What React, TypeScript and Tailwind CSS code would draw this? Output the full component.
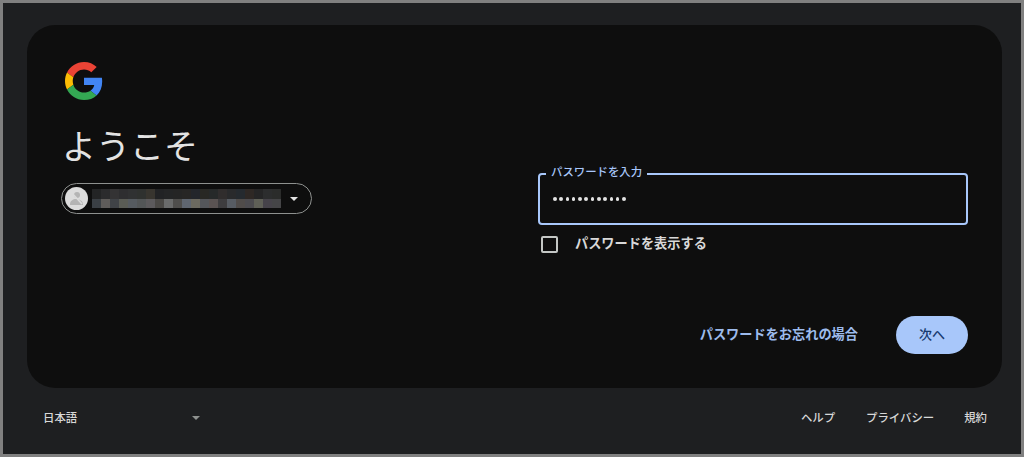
const jp = { fontFamily: '"Roboto", "Noto Sans CJK JP", sans-serif' };

const row1 = ["#232425","#2b2b2d","#343334","#2e2e30","#303132","#2f312f","#38352f","#222325","#242526","#252525","#272625","#23262b","#282824","#262929","#302d2d","#292a2c","#252a2f","#2e2825","#252526","#2c2d2e","#2b2c2b"];
const row2 = ["#3a3f44","#5f5c5a","#404347","#5a5c55","#565b60","#535657","#5c5a5c","#4a4845","#6a6b6b","#4f4e4c","#5f6670","#6c6a60","#54565a","#5a5352","#3e3d3f","#575c63","#504c4a","#4c4b4f","#5f6057","#46434a","#454547"];

function GoogleLogo() {
  return (
    <svg width="38" height="38" viewBox="0 0 48 48" aria-hidden="true">
      <path fill="#EA4335" d="M24 9.5c3.54 0 6.71 1.22 9.21 3.6l6.85-6.85C35.9 2.38 30.47 0 24 0 14.62 0 6.51 5.38 2.56 13.22l7.98 6.19C12.43 13.72 17.74 9.5 24 9.5z" />
      <path fill="#4285F4" d="M46.98 24.55c0-1.57-.15-3.09-.38-4.55H24v9.02h12.94c-.58 2.96-2.26 5.48-4.78 7.18l7.73 6c4.51-4.18 7.09-10.36 7.09-17.65z" />
      <path fill="#FBBC05" d="M10.53 28.59c-.48-1.45-.76-2.99-.76-4.59s.27-3.14.76-4.59l-7.98-6.19C.92 16.46 0 20.12 0 24c0 3.88.92 7.54 2.56 10.78l7.97-6.19z" />
      <path fill="#34A853" d="M24 48c6.48 0 11.93-2.13 15.89-5.81l-7.73-6c-2.15 1.45-4.92 2.3-8.16 2.3-6.26 0-11.57-4.22-13.47-9.91l-7.98 6.19C6.51 42.62 14.62 48 24 48z" />
    </svg>
  );
}

function Avatar() {
  return (
    <div className="w-[23px] h-[23px] rounded-full bg-[#dcdcdc] flex items-center justify-center shrink-0">
      <svg width="17" height="17" viewBox="0 0 17 17" aria-hidden="true">
        <circle cx="9" cy="5" r="3" fill="#b4b4b4" />
        <path d="M2 14c0-3 3-5 6-5s7 2 7 5v1H2z" fill="#b4b4b4" />
        <path d="M3 2l11 12" stroke="#dcdcdc" strokeWidth="1.6" />
      </svg>
    </div>
  );
}

function Caret({ color }: { color: string }) {
  return (
    <svg width="8" height="4" viewBox="0 0 8 4" aria-hidden="true">
      <path d="M0 0h8L4 4z" fill={color} />
    </svg>
  );
}

export default function App() {
  return (
    <div style={jp} className="w-[1024px] h-[457px] border-[3px] border-[#808080] bg-[#1e1f21] flex flex-col overflow-hidden">
      <main className="ml-[24px] mr-[19px] mt-[22px] h-[363px] rounded-[28px] bg-[#0e0e0e] flex justify-between shrink-0">
        <section className="pl-[38px] pt-[37px] flex flex-col items-start">
          <GoogleLogo />
          <h1 className="mt-[25px] ml-[-3px] text-[34px] leading-[44px] font-normal text-[#e3e3e3] whitespace-nowrap">ようこそ</h1>
          <div className="mt-[14px] ml-[-4px] w-[251px] h-[31px] rounded-full border border-[#8e918f] flex items-center pl-[3px]">
            <Avatar />
            <div className="ml-[4px] w-[189px] h-[19px] grid grid-cols-[repeat(21,1fr)] grid-rows-2 blur-[0.4px]">
              {row1.map((c, i) => <div key={`a${i}`} style={{ backgroundColor: c }} />)}
              {row2.map((c, i) => <div key={`b${i}`} style={{ backgroundColor: c }} />)}
            </div>
            <div className="ml-[9px] flex"><Caret color="#e3e3e3" /></div>
          </div>
        </section>
        <section className="w-[430px] mr-[34px] pt-[148px] flex flex-col">
          <div className="relative h-[52px] rounded-[4px] border-2 border-[#a8c7fa] flex items-center pl-[13px]">
            <span className="absolute left-[6px] top-[-11px] px-[5px] bg-[#0e0e0e] text-[11.4px] leading-[16px] font-medium text-[#a8c7fa] whitespace-nowrap">パスワードを入力</span>
            <div className="flex gap-[2.7px]">
              {Array.from({ length: 12 }).map((_, i) => (
                <span key={i} className="w-[3.6px] h-[3.6px] rounded-full bg-[#e3e3e3]" />
              ))}
            </div>
          </div>
          <label className="mt-[10px] flex items-center">
            <span className="ml-[3px] w-[17px] h-[17px] rounded-[2px] border-2 border-[#c4c7c5]" />
            <span className="ml-[17px] text-[13.2px] leading-[18px] font-bold text-[#d8d8d8] whitespace-nowrap">パスワードを表示する</span>
          </label>
          <div className="mt-[63px] flex items-center justify-end">
            <span className="text-[13.2px] leading-[18px] font-bold text-[#9dbbec] whitespace-nowrap">パスワードをお忘れの場合</span>
            <button className="ml-[38px] w-[72px] h-[38px] rounded-full bg-[#a8c7fa] text-[13px] font-medium text-[#183a6e]">次へ</button>
          </div>
        </section>
      </main>
      <footer className="flex-1 flex items-center justify-between pl-[40px] pr-[34px] pb-[6px] text-[11.4px] leading-[16px] font-medium text-[#d8d8d8]">
        <div className="flex items-center w-[157px] justify-between">
          <span>日本語</span>
          <Caret color="#8e918f" />
        </div>
        <nav className="flex gap-[30px]">
          <span className="mr-[1px]">ヘルプ</span>
          <span>プライバシー</span>
          <span>規約</span>
        </nav>
      </footer>
    </div>
  );
}
